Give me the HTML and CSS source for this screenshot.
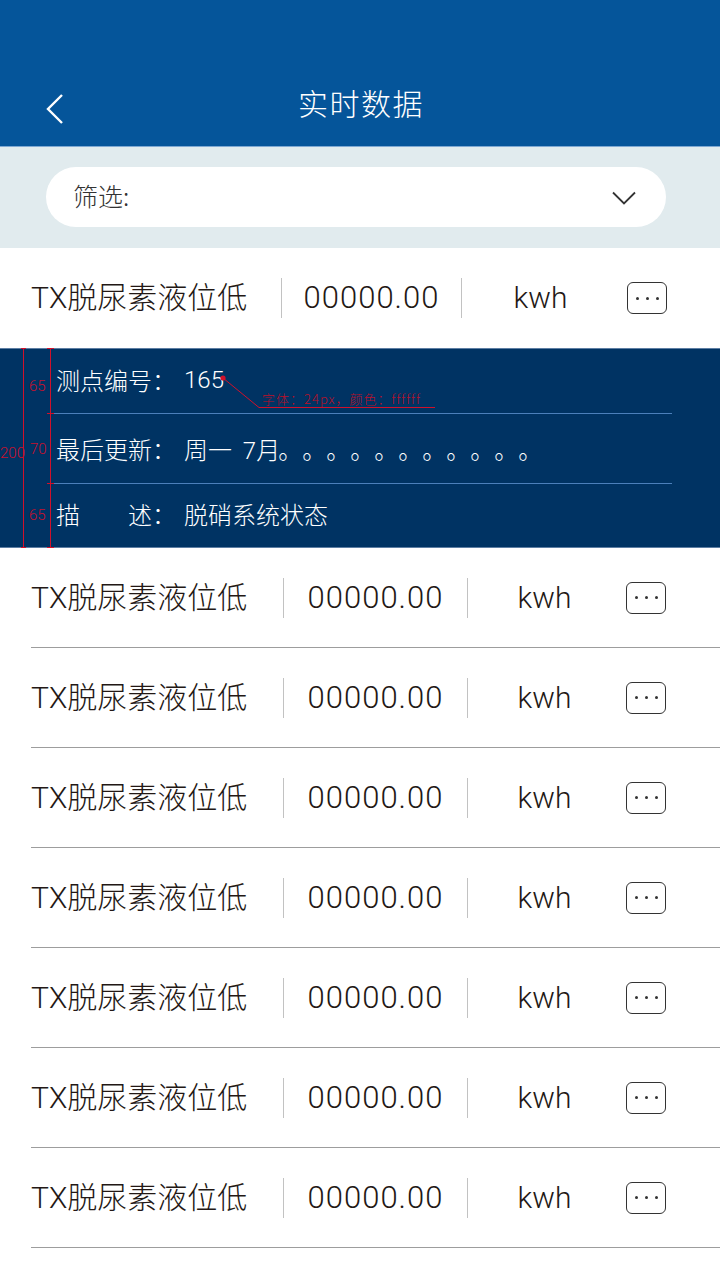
FILE: index.html
```html
<!DOCTYPE html>
<html lang="zh-CN">
<head>
<meta charset="utf-8">
<title>实时数据</title>
<link rel="stylesheet" href="styles.css">
</head>
<body>
<div class="app">
  <header class="topbar">
    <svg class="back" width="20" height="32" viewBox="0 0 20 32"><polyline points="17,2 3,16 17,30" fill="none" stroke="#fff" stroke-width="2.4"/></svg>
    <h1 class="title">实时数据</h1>
  </header>

  <div class="filter">
    <div class="select">
      <span class="select-label">筛选:</span>
      <svg class="select-arrow" width="24" height="14" viewBox="0 0 24 14"><polyline points="1,1.5 12,12.5 23,1.5" fill="none" stroke="#333" stroke-width="1.8"/></svg>
    </div>
  </div>

  <div class="list">
    <div class="row row-top">
      <span class="cell name">TX脱尿素液位低</span>
      <span class="sep"></span>
      <span class="cell num">00000.00</span>
      <span class="sep"></span>
      <span class="cell unit">kwh</span>
      <span class="more"><i></i><i></i><i></i></span>
    </div>

    <div class="detail">
      <div class="drow drow-65"><span class="dlabel">测点编号：</span><span class="dval">165</span></div>
      <div class="drow drow-70"><span class="dlabel">最后更新：</span><span class="dval">周一 <span class="day">7月</span><span class="dots">。。。。。。。。。。。</span></span></div>
      <div class="drow drow-65 last"><span class="dlabel justify"><span>描</span><span>述：</span></span><span class="dval">脱硝系统状态</span></div>

      <div class="anno">
        <svg class="anno-lines" width="720" height="200" viewBox="0 0 720 200">
          <g stroke="#d0112b" stroke-width="1" fill="none">
            <line x1="23.5" y1="0" x2="23.5" y2="200"/>
            <line x1="50.5" y1="0" x2="50.5" y2="200"/>
            <line x1="21" y1="0.5" x2="26" y2="0.5"/>
            <line x1="21" y1="199.5" x2="26" y2="199.5"/>
            <line x1="47" y1="0.5" x2="54" y2="0.5"/>
            <line x1="47" y1="65.5" x2="54" y2="65.5"/>
            <line x1="47" y1="135.5" x2="54" y2="135.5"/>
            <line x1="47" y1="199.5" x2="54" y2="199.5"/>
            <polyline points="223,30 259,59.5 435,59.5"/>
          </g>
          <circle cx="223" cy="30" r="2.6" fill="#d0112b"/>
        </svg>
        <span class="anno-t t200">200</span>
        <span class="anno-t t65a">65</span>
        <span class="anno-t t70">70</span>
        <span class="anno-t t65b">65</span>
        <span class="anno-note">字体：24px，颜色：ffffff</span>
      </div>
    </div>

    <div class="row">
      <span class="cell name">TX脱尿素液位低</span><span class="sep"></span><span class="cell num">00000.00</span><span class="sep"></span><span class="cell unit">kwh</span><span class="more"><i></i><i></i><i></i></span>
    </div>
    <div class="row">
      <span class="cell name">TX脱尿素液位低</span><span class="sep"></span><span class="cell num">00000.00</span><span class="sep"></span><span class="cell unit">kwh</span><span class="more"><i></i><i></i><i></i></span>
    </div>
    <div class="row">
      <span class="cell name">TX脱尿素液位低</span><span class="sep"></span><span class="cell num">00000.00</span><span class="sep"></span><span class="cell unit">kwh</span><span class="more"><i></i><i></i><i></i></span>
    </div>
    <div class="row">
      <span class="cell name">TX脱尿素液位低</span><span class="sep"></span><span class="cell num">00000.00</span><span class="sep"></span><span class="cell unit">kwh</span><span class="more"><i></i><i></i><i></i></span>
    </div>
    <div class="row">
      <span class="cell name">TX脱尿素液位低</span><span class="sep"></span><span class="cell num">00000.00</span><span class="sep"></span><span class="cell unit">kwh</span><span class="more"><i></i><i></i><i></i></span>
    </div>
    <div class="row">
      <span class="cell name">TX脱尿素液位低</span><span class="sep"></span><span class="cell num">00000.00</span><span class="sep"></span><span class="cell unit">kwh</span><span class="more"><i></i><i></i><i></i></span>
    </div>
    <div class="row">
      <span class="cell name">TX脱尿素液位低</span><span class="sep"></span><span class="cell num">00000.00</span><span class="sep"></span><span class="cell unit">kwh</span><span class="more"><i></i><i></i><i></i></span>
    </div>
  </div>
</div>
</body>
</html>
```

FILE: styles.css
```css
* { box-sizing: border-box; margin: 0; padding: 0; }

html, body {
  width: 720px;
  height: 1280px;
  background: #fff;
  overflow: hidden;
}

body {
  font-family: Roboto, "Noto Sans CJK SC", sans-serif;
  font-weight: 300;
  color: #231815;
}

.app {
  width: 720px;
  display: flex;
  flex-direction: column;
}

/* header */
.topbar {
  height: 147px;
  background: #05559a;
  border-bottom: 1px solid #7fa9d3;
  display: flex;
  align-items: flex-end;
  justify-content: center;
  position: relative;
  padding-bottom: 22px;
}

.back {
  position: absolute;
  left: 45px;
  top: 93px;
}

.title {
  font-family: "Noto Sans CJK SC", sans-serif;
  font-weight: 300;
  font-size: 30px;
  line-height: 44px;
  color: #fff;
  letter-spacing: 1.5px;
  padding-left: 2px;
}

/* filter */
.filter {
  height: 101px;
  background: #e1ebee;
  padding: 20px 54px 0 46px;
}

.select {
  height: 60px;
  border-radius: 30px;
  background: #fff;
  display: flex;
  align-items: center;
  justify-content: space-between;
  padding: 0 30px 0 27px;
}

.select-label {
  font-family: "Noto Sans CJK SC", sans-serif;
  font-size: 25px;
  line-height: 30px;
  color: #333;
  font-weight: 300;
  margin-top: -5px;
}

.select-arrow { margin-top: 2px; }

/* rows */
.row {
  height: 100px;
  margin-left: 31px;
  border-bottom: 1px solid #9d9d9d;
  display: flex;
  align-items: center;
  font-size: 30px;
  --w-name: 252px;
  --w-num: 183px;
  --w-unit: 153px;
  --gap-more: 5px;
}

.row-top {
  border-bottom: none;
  --w-name: 250px;
  --w-num: 179px;
  --w-unit: 157px;
  --gap-more: 8px;
}

.cell { white-space: nowrap; line-height: 40px; }
.name { width: var(--w-name); }
.num  { width: var(--w-num); text-align: center; font-size: 31px; letter-spacing: 1px; }
.unit { width: var(--w-unit); text-align: center; font-size: 30px; }

.sep {
  width: 1px;
  height: 40px;
  background: #c2c2c2;
}

.more {
  width: 40px;
  height: 32px;
  margin-left: var(--gap-more);
  border: 1.5px solid #333;
  border-radius: 6px;
  display: flex;
  align-items: center;
  justify-content: center;
  gap: 7px;
}

.more i {
  width: 3px;
  height: 3px;
  border-radius: 50%;
  background: #333;
}

/* expanded detail */
.detail {
  height: 200px;
  background: #003363;
  border-top: 1px solid #5d7ea3;
  border-bottom: 1px solid #5d7ea3;
  display: flex;
  flex-direction: column;
  position: relative;
}

.drow {
  margin: 0 48px 0 50px;
  padding-left: 6px;
  display: flex;
  align-items: center;
  border-bottom: 1px solid #4c80bb;
  color: #fff;
  font-family: "Noto Sans CJK SC", sans-serif;
  font-weight: 300;
  font-size: 24px;
}

.drow-65 { height: 65px; padding-bottom: 3px; }
.drow-70 { height: 70px; }
.drow.last { border-bottom: none; flex: 1; padding-bottom: 4px; }

.dlabel {
  width: 120px;
  margin-right: 8px;
  white-space: nowrap;
}

.dlabel.justify {
  display: flex;
  justify-content: space-between;
}

.dval {
  font-family: Roboto, "Noto Sans CJK SC", sans-serif;
  white-space: nowrap;
}

.day { margin-left: 5px; }

.dots {
  font-family: "Noto Sans CJK SC", sans-serif;
  letter-spacing: 12px;
  margin-left: -2px;
}

/* design annotations */
.anno {
  position: absolute;
  inset: -1px 0 -1px 0;
  pointer-events: none;
}

.anno-lines {
  position: absolute;
  left: 0;
  top: 0;
}

.anno-t {
  position: absolute;
  font-family: Roboto, "Liberation Sans", sans-serif;
  font-weight: 300;
  font-size: 15px;
  line-height: 16px;
  color: #c8102e;
}

.t200 { left: 0; top: 97px; }
.t65a { left: 29px; top: 30px; }
.t70  { left: 30px; top: 93px; }
.t65b { left: 29px; top: 159px; }

.anno-note {
  position: absolute;
  left: 262px;
  top: 43px;
  font-family: "Noto Sans CJK SC", sans-serif;
  font-size: 13px;
  line-height: 16px;
  letter-spacing: 1px;
  color: #b8102a;
  white-space: nowrap;
}
```
